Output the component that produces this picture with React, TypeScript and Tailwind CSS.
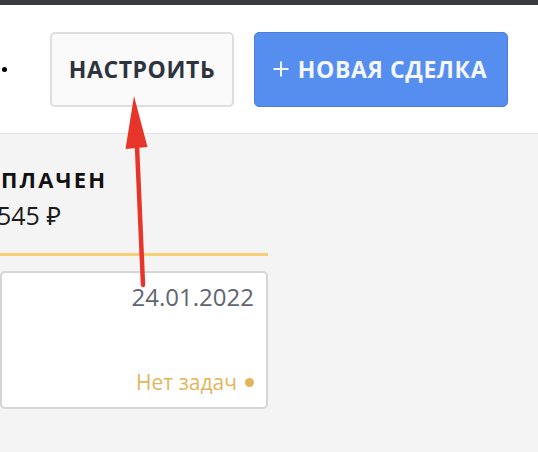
import React from "react";

function PlusIcon() {
  return (
    <svg width="16" height="16" viewBox="0 0 16 16" className="shrink-0">
      <path d="M8 0.5V15.5M0.5 8H15.5" stroke="currentColor" strokeWidth="2" />
    </svg>
  );
}

function Arrow() {
  return (
    <svg
      width="538"
      height="452"
      viewBox="0 0 538 452"
      className="pointer-events-none absolute left-0 top-0"
    >
      <path d="M137 146L143 285" stroke="#e8352b" strokeWidth="4.5" strokeLinecap="round" />
      <path d="M134 96L125.5 149L147.5 147Z" fill="#e8352b" />
    </svg>
  );
}

function DealCard() {
  return (
    <div className="flex h-[138px] flex-col justify-between rounded-[5px] border-2 border-[#d5d5d5] bg-white pb-[11px] pr-[12px] pt-[9px]">
      <div className="text-right text-[24px] leading-[30px] text-[#5f6571]">24.01.2022</div>
      <div className="flex items-center justify-end text-[21px] leading-[28px] text-[#e2b55c]">
        <span>Нет задач</span>
        <span className="ml-[8px] h-[9px] w-[9px] rounded-full bg-[#e2b55c]" />
      </div>
    </div>
  );
}

export default function App() {
  return (
    <div
      className="relative h-[452px] w-[538px] overflow-hidden bg-[#f4f4f4]"
      style={{ fontFamily: '"Open Sans", "Noto Sans", sans-serif' }}
    >
      <div className="h-[5px] bg-[#3a3b3f]" />

      <header className="flex h-[129px] items-center border-b border-[#e3e3e3] bg-white pl-[2px]">
        <span className="h-[5px] w-[5px] rounded-full bg-black" />
        <button
          type="button"
          className="ml-[43px] flex h-[75px] w-[184px] items-center justify-center rounded-[5px] border-2 border-[#dedede] bg-[#fafafa] text-[23px] font-bold tracking-[0.6px] text-[#2e333d]"
        >
          НАСТРОИТЬ
        </button>
        <button
          type="button"
          className="ml-[20px] flex h-[75px] w-[254px] items-center justify-center gap-[9px] rounded-[5px] border border-[#4b7fda] bg-[#568ef0] pr-[2px] text-[23px] font-bold tracking-[0.6px] text-[#f4f7fc]"
        >
          <PlusIcon />
          НОВАЯ СДЕЛКА
        </button>
      </header>

      <main className="w-[268px] pt-[30px]">
        <div className="pl-[1px] text-[22px] font-bold leading-[30px] tracking-[2.2px] text-[#111]">
          ПЛАЧЕН
        </div>
        <div className="-ml-[3px] mt-[5px] text-[25px] leading-[32px] text-[#1c1c1c]">545 ₽</div>
        <div className="mt-[22px] h-[3px] bg-[#f7cf74]" />
        <div className="mt-[15px]">
          <DealCard />
        </div>
      </main>

      <Arrow />
    </div>
  );
}
